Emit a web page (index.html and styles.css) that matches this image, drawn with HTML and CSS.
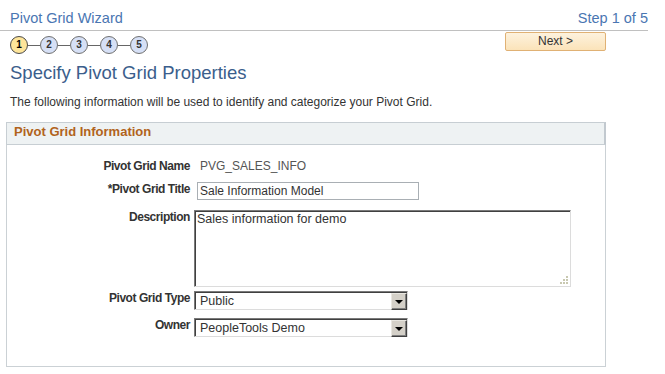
FILE: index.html
```html
<!DOCTYPE html>
<html lang="en">
<head>
  <meta charset="UTF-8">
  <meta name="viewport" content="width=device-width, initial-scale=1.0">
  <title>Pivot Grid Wizard</title>
  <link rel="stylesheet" href="styles.css">
</head>
<body>
  <div class="wizard-header">
    <div class="wizard-title">Pivot Grid Wizard</div>
    <div class="wizard-step">Step 1 of 5</div>
  </div>

  <div class="step-bar">
    <div class="steps">
      <div class="step step-current">1</div>
      <div class="step-line"></div>
      <div class="step">2</div>
      <div class="step-line"></div>
      <div class="step">3</div>
      <div class="step-line"></div>
      <div class="step">4</div>
      <div class="step-line"></div>
      <div class="step">5</div>
    </div>
    <div class="next-button">Next &gt;</div>
  </div>

  <h1 class="page-title">Specify Pivot Grid Properties</h1>
  <p class="page-intro">The following information will be used to identify and categorize your Pivot Grid.</p>

  <div class="panel">
    <div class="panel-head">Pivot Grid Information</div>
    <div class="panel-body">
      <div class="field field-name">
        <div class="field-label">Pivot Grid Name</div>
        <div class="field-value">PVG_SALES_INFO</div>
      </div>
      <div class="field field-title">
        <div class="field-label">*Pivot Grid Title</div>
        <div class="text-input">Sale Information Model</div>
      </div>
      <div class="field field-desc">
        <div class="field-label">Description</div>
        <div class="text-area">
          Sales information for demo
          <svg class="grip" width="8" height="8" viewBox="0 0 8 8">
            <rect x="6" y="0" width="2" height="2" fill="#c8c8b0"/>
            <rect x="3" y="3" width="2" height="2" fill="#c8c8b0"/>
            <rect x="6" y="3" width="2" height="2" fill="#c8c8b0"/>
            <rect x="0" y="6" width="2" height="2" fill="#c8c8b0"/>
            <rect x="3" y="6" width="2" height="2" fill="#c8c8b0"/>
            <rect x="6" y="6" width="2" height="2" fill="#c8c8b0"/>
          </svg>
        </div>
      </div>
      <div class="field field-type">
        <div class="field-label">Pivot Grid Type</div>
        <div class="select-box">
          <span class="select-text">Public</span>
          <span class="select-arrow"></span>
        </div>
      </div>
      <div class="field field-owner">
        <div class="field-label">Owner</div>
        <div class="select-box">
          <span class="select-text">PeopleTools Demo</span>
          <span class="select-arrow"></span>
        </div>
      </div>
    </div>
  </div>
</body>
</html>
```

FILE: styles.css
```css
body {
  margin: 0;
  padding: 0;
  background-color: #ffffff;
  color: #333333;
  font-family: "Liberation Sans", Arial, Helvetica, sans-serif;
}

.wizard-header {
  display: flex;
  justify-content: space-between;
  width: 648px;
  box-sizing: border-box;
  padding: 9px 0 3px 10px;
  border-bottom: 1px solid #c0c0c0;
  font-size: 14.5px;
  line-height: 18px;
  color: #4a76b2;
}

.step-bar {
  display: flex;
  justify-content: space-between;
  align-items: flex-start;
  width: 606px;
  box-sizing: border-box;
  padding: 1px 0 0 10px;
}

.steps {
  display: flex;
  align-items: center;
  margin-top: 4px;
}

.step {
  width: 16px;
  height: 16px;
  border: 1px solid #707070;
  border-radius: 50%;
  background-color: #d6e0f6;
  font-size: 10px;
  font-weight: bold;
  line-height: 16px;
  text-align: center;
  color: #333333;
}

.step-current {
  background-color: #fee59a;
  border-color: #4a4a4a;
  color: #000000;
}

.step-line {
  width: 12px;
  height: 1px;
  background-color: #666666;
}

.next-button {
  width: 99px;
  height: 17px;
  border: 1px solid #e0b174;
  border-radius: 2px;
  background: linear-gradient(#fdf2de, #fbe3b9);
  font-size: 12px;
  line-height: 17px;
  text-align: center;
  color: #333333;
}

.page-title {
  margin: 8px 0 0 10px;
  font-size: 18.5px;
  font-weight: normal;
  line-height: 22px;
  color: #3b5e8c;
}

.page-intro {
  margin: 11px 0 0 10px;
  font-size: 12px;
  line-height: 15px;
  color: #333333;
}

.panel {
  width: 600px;
  margin: 12px 0 0 6px;
  border: 1px solid #cbd1d5;
  border-top: none;
  box-sizing: border-box;
}

.panel-head {
  margin: 0 -1px;
  padding: 0 0 3px 7px;
  border: 1px solid #c7ced3;
  border-right: 2px solid #c2c9cf;
  background-color: #eef2f3;
  font-size: 13px;
  font-weight: bold;
  line-height: 18px;
  color: #b1631c;
}

.panel-body {
  padding: 14px 0 29px 0;
}

.field {
  display: grid;
  grid-template-columns: 183px 1fr;
  column-gap: 4px;
  align-items: start;
}

.field-title {
  margin-top: 8px;
}

.field-desc {
  margin-top: 10px;
}

.field-type {
  margin-top: 4px;
}

.field-owner {
  margin-top: 8px;
}

.field-label {
  font-size: 12px;
  font-weight: bold;
  letter-spacing: -0.45px;
  line-height: 15px;
  text-align: right;
  color: #333333;
}

.field-value {
  padding-left: 6px;
  font-size: 12px;
  line-height: 15px;
  color: #555555;
}

.text-input {
  width: 222px;
  height: 18px;
  margin-left: 3px;
  box-sizing: border-box;
  padding-left: 2px;
  border: 1px solid #a9afb4;
  font-size: 12px;
  line-height: 16px;
  color: #333333;
}

.text-area {
  position: relative;
  width: 377px;
  height: 77px;
  box-sizing: border-box;
  padding: 1px 2px;
  border: 1px solid;
  border-color: #7a7a7a #dcdcdc #dcdcdc #7a7a7a;
  box-shadow: inset 1px 1px 0 #404040;
  font-size: 12.5px;
  line-height: 15px;
  color: #333333;
}

.grip {
  position: absolute;
  right: 2px;
  bottom: 2px;
}

.select-box {
  display: flex;
  justify-content: space-between;
  width: 214px;
  height: 19px;
  box-sizing: border-box;
  padding: 1px 0 0 1px;
  border: 1px solid;
  border-color: #7a7a7a #dcdcdc #dcdcdc #7a7a7a;
  box-shadow: inset 1px 1px 0 #404040;
}

.select-text {
  padding-left: 4px;
  font-size: 12.5px;
  line-height: 16px;
  color: #333333;
}

.select-arrow {
  position: relative;
  width: 16px;
  height: 17px;
  box-sizing: border-box;
  border: 1px solid;
  border-color: #e8e6e0 #404040 #404040 #e8e6e0;
  box-shadow: inset -1px -1px 0 #808080;
  background-color: #d4d0c8;
}

.select-arrow::after {
  content: "";
  position: absolute;
  left: 3px;
  top: 6px;
  border-left: 4px solid transparent;
  border-right: 4px solid transparent;
  border-top: 4px solid #000000;
}
```
